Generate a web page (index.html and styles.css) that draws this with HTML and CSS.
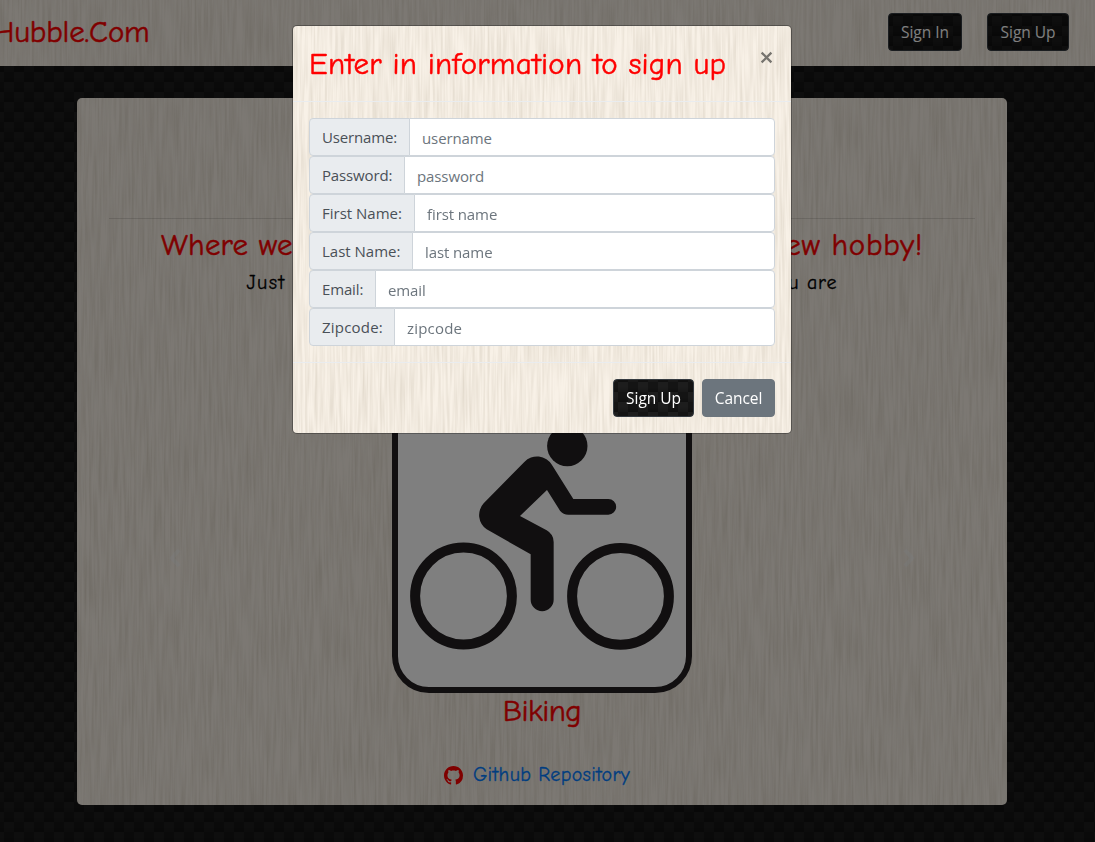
FILE: index.html
```html
<!DOCTYPE html>
<html lang="en">
<head>
<meta charset="utf-8">
<title>Hubble.Com</title>
<link rel="stylesheet" href="styles.css">
</head>
<body>
<nav class="navbar wood">
  <a class="brand">Hubble.Com</a>
  <div class="nav-actions"><button class="btn carbon signin">Sign In</button><button class="btn carbon signup">Sign Up</button></div>
</nav>
<main class="card wood">
  <hr class="rule">
  <h2 class="tagline"><span class="tag-left">Where we</span><span class="tag-right">new hobby!</span></h2>
  <p class="lead"><span class="lead-left">Just</span><span class="lead-right">you are</span></p>
  <section class="carousel">
    <svg class="chevron" viewBox="0 0 12 20"><path d="M10 2 3 10l7 8"/></svg>
    <svg class="bike" viewBox="0 0 300 300">
      <rect x="3" y="3" width="294" height="294" rx="34" fill="#fff" stroke="#221e20" stroke-width="6"/>
      <g fill="none" stroke="#221e20" stroke-width="10"><circle cx="71.5" cy="203" r="48.4"/><circle cx="228.5" cy="203.3" r="48.4"/></g>
      <circle cx="175.3" cy="53" r="20.2" fill="#221e20"/>
      <path transform="translate(-2 37) scale(.33333)" fill="#221e20" d="M403 96A52 52 0 0 1 486 105L550 207H655A23.5 23.5 0 0 1 655 254H535Q520 254 510 242L471 180 390 258 470 301Q491 313 491 336V509A34.5 34.5 0 0 1 422 509V373L290 298A52 52 0 0 1 281 220Z"/>
    </svg>
    <svg class="chevron" viewBox="0 0 12 20"><path d="m2 2 7 8-7 8"/></svg>
  </section>
  <h3 class="hobby">Biking</h3>
  <footer class="repo">
    <svg class="github" viewBox="0 0 16 16"><path d="M8 0C3.58 0 0 3.58 0 8c0 3.54 2.29 6.53 5.47 7.59.4.07.55-.17.55-.38 0-.19-.01-.82-.01-1.49-2.01.37-2.53-.49-2.69-.94-.09-.23-.48-.94-.82-1.13-.28-.15-.68-.52-.01-.53.63-.01 1.08.58 1.23.82.72 1.21 1.87.87 2.33.66.07-.52.28-.87.51-1.07-1.78-.2-3.64-.89-3.64-3.95 0-.87.31-1.59.82-2.15-.08-.2-.36-1.02.08-2.12 0 0 .67-.21 2.2.82.64-.18 1.32-.27 2-.27s1.36.09 2 .27c1.53-1.04 2.2-.82 2.2-.82.44 1.1.16 1.92.08 2.12.51.56.82 1.27.82 2.15 0 3.07-1.87 3.75-3.65 3.95.29.25.54.73.54 1.48 0 1.07-.01 1.93-.01 2.2 0 .21.15.46.55.38A8.01 8.01 0 0 0 16 8c0-4.42-3.58-8-8-8z"/></svg>
    <a class="repo-link">Github Repository</a>
  </footer>
</main>
<div class="backdrop">
  <div class="modal wood" role="dialog">
    <header class="modal-header"><h2 class="modal-title">Enter in information to sign up</h2>
      <svg class="close" viewBox="0 0 12 12"><path d="m1.5 1.5 9 9m0-9-9 9"/></svg></header>
    <form class="modal-body">
      <div class="group"><label class="label w-user">Username:</label><input class="field" placeholder="username"></div>
      <div class="group"><label class="label w-pass">Password:</label><input class="field" placeholder="password"></div>
      <div class="group"><label class="label w-first">First Name:</label><input class="field" placeholder="first name"></div>
      <div class="group"><label class="label w-last">Last Name:</label><input class="field" placeholder="last name"></div>
      <div class="group"><label class="label w-email">Email:</label><input class="field" placeholder="email"></div>
      <div class="group"><label class="label w-zip">Zipcode:</label><input class="field wide" placeholder="zipcode"></div>
    </form>
    <footer class="modal-footer"><button class="btn carbon submit">Sign Up</button><button class="btn cancel">Cancel</button></footer>
  </div>
</div>
</body>
</html>
```
FILE: styles.css
```css
* { box-sizing: border-box; }
body, .carbon {
  background-color: #191919;
  background-image:
    repeating-linear-gradient(#0000 0 5px, #0003 10px),
    conic-gradient(#141414 25%, #1d1d1d 0 50%, #141414 0 75%, #1d1d1d 0);
  background-size: 20px 20px;
  background-position: 4px 2px;
}
body {
  margin: 0;
  height: 842px;
  overflow: hidden;
  font-family: "Open Sans", "Noto Sans", sans-serif;
  font-size: 15px;
}
.wood {
  background-color: #f8f1e7;
  background-image: url("data:image/svg+xml,%3Csvg xmlns='http://www.w3.org/2000/svg' width='512' height='512'%3E%3Cfilter id='g' x='0' y='0' width='100%25' height='100%25'%3E%3CfeTurbulence type='fractalNoise' baseFrequency='.4 .018' numOctaves='2' seed='8' stitchTiles='stitch'/%3E%3CfeColorMatrix values='0 0 0 0 .35 0 0 0 0 .29 0 0 0 0 .2 .4 0 0 0 -.13'/%3E%3C/filter%3E%3Crect width='512' height='512' filter='url(%23g)'/%3E%3C/svg%3E");
}
h2, h3, p { margin: 0; font-weight: 400; }
.brand, .tagline, .hobby, .modal-title, .lead, .repo-link { font-family: "Comic Sans MS", "Comic Neue", Lato, sans-serif; white-space: nowrap; -webkit-text-stroke: .3px currentColor; }
.brand, .tagline, .hobby, .modal-title { color: #f00; font-size: 31px; line-height: 34px; -webkit-text-stroke-width: .5px; }
.navbar { height: 66px; display: flex; align-items: center; justify-content: space-between; padding-right: 26px; }
.brand { margin: -2px 0 0 -8px; letter-spacing: -.2px; }
.nav-actions { display: flex; gap: 25px; margin-top: -2px; }
.btn {
  height: 38px;
  padding: 0;
  border: 1px solid #343a40;
  border-radius: 4px;
  color: #fff;
  font: 15.5px "Open Sans", sans-serif;
  letter-spacing: -.05px;
}
.signin { width: 74px; }
.signup { width: 82px; }
.card { width: 930px; height: 707px; margin: 32px 0 0 77px; padding: 120px 32px 0; border-radius: 5px; display: flex; flex-direction: column; align-items: center; }
.rule { width: 866px; margin: 0 0 9px; border: 0; border-top: 1px solid rgba(0, 0, 0, .12); }
.tagline { width: 762px; display: flex; justify-content: space-between; }
.tag-left { letter-spacing: .2px; }
.tag-right { letter-spacing: .65px; }
.lead { width: 591px; margin-top: 7px; display: flex; justify-content: space-between; font-size: 20px; line-height: 28px; letter-spacing: .9px; }
.lead-left { letter-spacing: 1.4px; }
.carousel { width: 746px; height: 300px; margin-top: 96px; display: flex; justify-content: space-between; align-items: center; }
.bike { width: 300px; height: 300px; }
.chevron { width: 12px; height: 20px; margin-top: 30px; fill: none; stroke: #f4faff; stroke-width: 4; opacity: .3; }
.hobby { margin-top: 1px; letter-spacing: -.6px; }
.repo { display: flex; align-items: center; gap: 10px; margin: 33px 10px 0 0; }
.github { width: 19px; height: 19px; fill: #f00; }
.repo-link { color: #007bff; font-size: 20px; line-height: 28px; letter-spacing: .35px; }
.backdrop { position: fixed; inset: 0; background: rgba(0, 0, 0, .5); padding: 26px 0 0 293px; }
.modal { width: 498px; height: 407px; border-radius: 4px; box-shadow: 0 0 0 1px rgba(0, 0, 0, .3); }
.modal-header { height: 76px; padding: 21px 18px 0 16px; border-bottom: 1px solid #e9ecef; display: flex; justify-content: space-between; }
.modal-title { letter-spacing: .24px; }
.close { width: 13px; height: 13px; flex: none; margin-top: 4px; fill: none; stroke: #77746f; stroke-width: 2.1; }
.modal-body { padding: 16px; height: 260px; }
.group { display: flex; height: 38px; }
.label { flex: none; padding: 0 0 0 12px; border: 1px solid #ced4da; border-radius: 4px 0 0 4px; background: #e9ecef; color: #495057; line-height: 36px; letter-spacing: -.15px; }
.field { flex: 1; min-width: 0; margin-left: -1px; padding: 2px 12px 0; border: 1px solid #ced4da; border-radius: 0 4px 4px 0; background: #fff; font: 15px "Open Sans", sans-serif; letter-spacing: -.1px; }
.wide { letter-spacing: .2px; }
.field::placeholder { color: #6c757d; opacity: 1; }
.w-user { width: 101px; }
.w-pass { width: 96px; }
.w-first { width: 106px; letter-spacing: 0; }
.w-last { width: 104px; letter-spacing: 0; }
.w-email { width: 67px; }
.w-zip { width: 86px; letter-spacing: .2px; }
.modal-footer { border-top: 1px solid #e9ecef; padding: 16px; display: flex; justify-content: flex-end; gap: 8px; }
.submit { width: 81px; }
.cancel { width: 73px; background: #6c757d; border-color: #6c757d; }
```
